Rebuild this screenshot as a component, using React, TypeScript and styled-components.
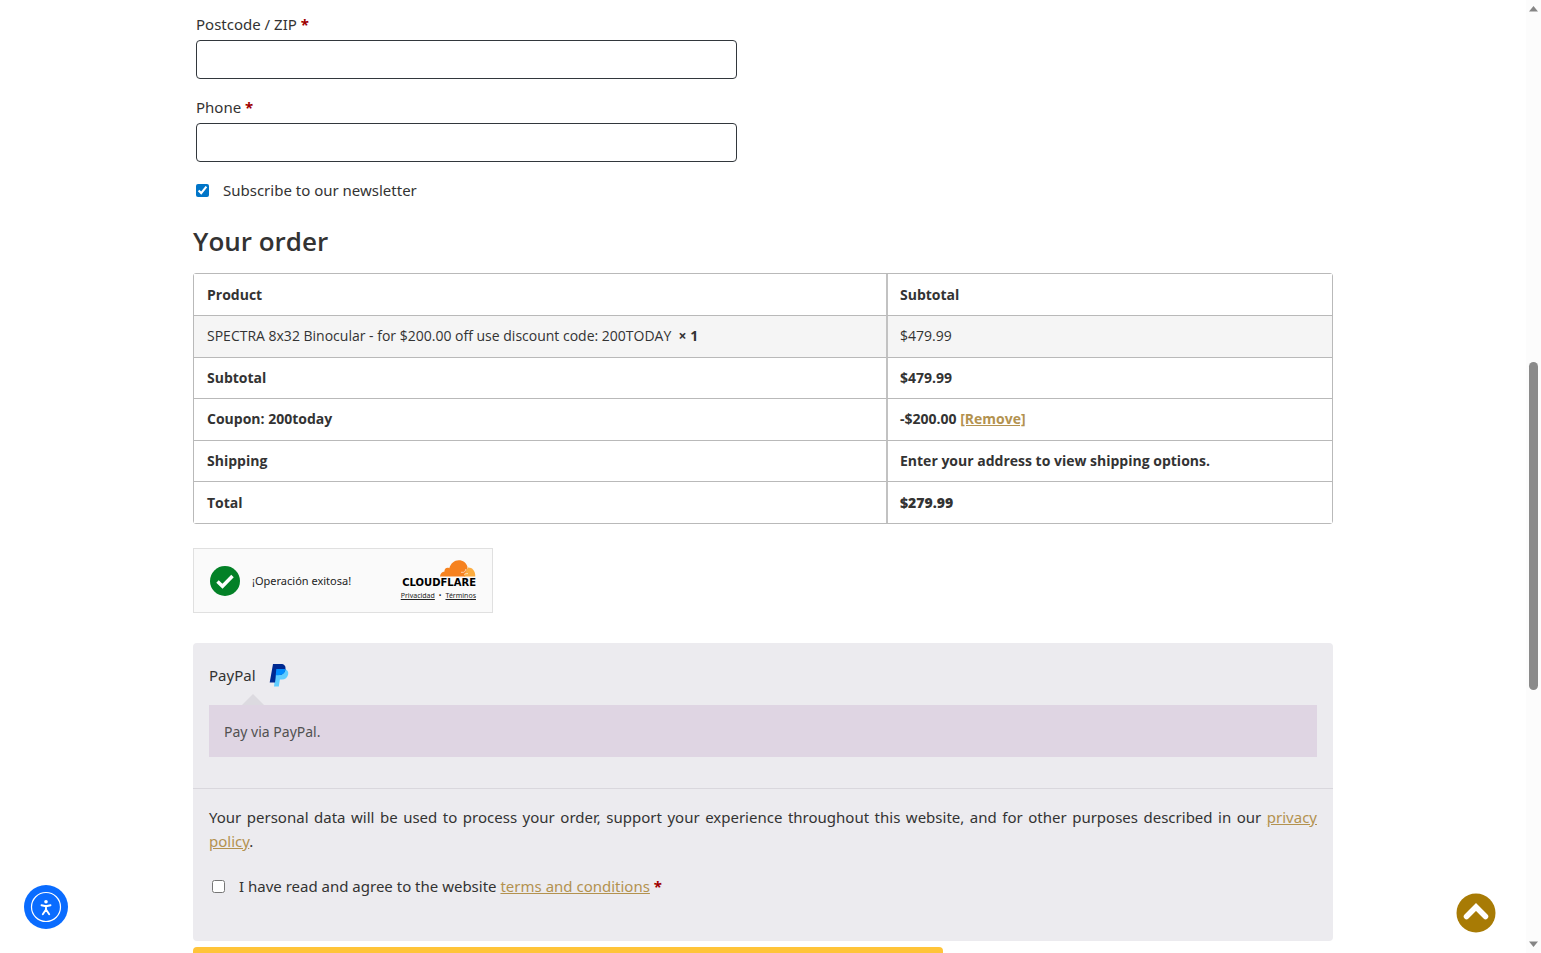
import React from "react";
import styled, { createGlobalStyle } from "styled-components";

const GlobalStyle = createGlobalStyle`
  *, *::before, *::after { box-sizing: border-box; }
  body {
    margin: 0;
    background: #fff;
    color: #333;
    font: 15px/24px "Noto Sans", "Open Sans", sans-serif;
  }
`;

const Viewport = styled.div`
  display: flex;
  height: 100vh;
  overflow: hidden;
`;

const Page = styled.main`
  flex: 1;
  min-width: 0;
`;

const Checkout = styled.form`
  max-width: 1140px;
  margin: 0 auto;
  padding-top: 12px;
`;

const Fields = styled.div`
  display: flex;
  flex-direction: column;
  gap: 16px;
  padding-left: 3px;
`;

const Field = styled.div`
  display: flex;
  flex-direction: column;
  gap: 4px;
  max-width: 541px;
`;

const TextInput = styled.input`
  width: 100%;
  height: 39px;
  padding: 8px 12px;
  border: 1px solid #32373c;
  border-radius: 4px;
  background: #fff;
  font: inherit;
`;

const Required = styled.span`
  color: #a00000;
  font-weight: 700;
`;

const CheckLabel = styled.label<{ $inset?: boolean }>`
  display: flex;
  align-items: center;
  gap: 14px;
  padding-left: ${(p) => (p.$inset ? "3px" : "0")};
`;

const CheckBox = styled.input`
  width: 13px;
  height: 13px;
  margin: 0;
  accent-color: #0075c8;
`;

const Link = styled.a`
  color: #b3924f;
  text-decoration: underline;
`;

const Heading = styled.h3`
  margin: 23px 0 16px;
  font-family: "Open Sans", sans-serif;
  font-size: 26px;
  line-height: 32px;
  font-weight: 600;
`;

const OrderTable = styled.table`
  width: 100%;
  height: 251px;
  border: 1px solid #b9b9b9;
  border-radius: 3px;
  border-spacing: 0;
  font-family: "Open Sans", sans-serif;
  font-size: 14px;
  line-height: 20px;
  text-align: left;
`;

const Cell = styled.td<{ $weight?: number }>`
  padding: 10px 13px;
  font-weight: ${(p) => p.$weight ?? 400};
  & + & {
    width: 446px;
    padding-left: 12px;
    border-left: 2px solid #c2c2c2;
  }
`;

const Row = styled.tr<{ $shaded?: boolean }>`
  background: ${(p) => (p.$shaded ? "#f5f5f5" : "#fff")};
  & > * { border-top: 1px solid #b9b9b9; }
  thead & > * { height: 41px; border-top: 0; }
`;

const Captcha = styled.section`
  display: flex;
  align-items: center;
  width: 300px;
  height: 65px;
  margin: 24px 0 30px;
  padding: 0 16px;
  border: 1px solid #e0e0e0;
  background: #fafafa;
  color: #232323;
  font-size: 11px;
`;

const CaptchaText = styled.span`
  flex: 1;
  padding-left: 12px;
`;

const Brand = styled.div`
  display: flex;
  flex-direction: column;
  align-items: flex-end;
`;

const BrandName = styled.span`
  color: #000;
  font: 700 10px/12px "DejaVu Sans", sans-serif;
`;

const BrandLinks = styled.div`
  display: flex;
  gap: 4px;
  margin-top: 1px;
  font-size: 7px;
  line-height: 12px;
  a { color: inherit; }
`;

const Payment = styled.section`
  border-radius: 4px;
  background: #ecebef;
`;

const Methods = styled.div`
  padding: 19px 16px 31px;
  border-bottom: 1px solid #d9d7dd;
`;

const Method = styled.div`
  display: flex;
  align-items: center;
  gap: 13px;
  height: 26px;
`;

const MethodBox = styled.div`
  position: relative;
  margin-top: 17px;
  padding: 15px 15px 13px;
  background: #dfd5e3;
  color: #515151;
  font-size: 14px;
  &::before {
    content: "";
    position: absolute;
    left: 33px;
    bottom: 100%;
    border: 11px solid transparent;
    border-top-width: 0;
    border-bottom-color: #dcdae0;
  }
`;

const Terms = styled.div`
  display: flex;
  flex-direction: column;
  gap: 21px;
  padding: 16px 16px 43px;
`;

const Paragraph = styled.p`
  margin: 0;
  text-align: justify;
`;

const PayButton = styled.button`
  display: block;
  width: 100%;
  max-width: 750px;
  height: 48px;
  margin-top: 6px;
  border: 0;
  border-radius: 4px;
  background: #ffc439;
`;

const RoundButton = styled.button<{ $side: "left" | "right" }>`
  position: fixed;
  bottom: ${(p) => (p.$side === "left" ? "24px" : "20px")};
  ${(p) => (p.$side === "left" ? "left: 24px;" : "right: 45px;")}
  padding: 0;
  border: 0;
  background: none;
  svg { display: block; }
`;

const ScrollTrack = styled.div`
  display: flex;
  flex-direction: column;
  align-items: center;
  width: 15px;
  padding: 6px 0;
  background: #fcfcfc;
`;

const ScrollSpace = styled.div<{ $grow: number }>`
  flex: ${(p) => p.$grow} 0 0;
`;

const ScrollThumb = styled.div`
  flex: 328 0 0;
  width: 9px;
  border-radius: 5px;
  background: #8b8b8b;
`;

const rows = [
  { label: "Subtotal", value: "$479.99" },
  { label: "Coupon: 200today", value: "-$200.00 ", remove: true },
  { label: "Shipping", value: "Enter your address to view shipping options." },
  { label: "Total", value: "$279.99", weight: 800 },
];

function PayPalMark() {
  return (
    <svg width="20" height="24" viewBox="0 0 20 24" aria-hidden="true">
      <path d="M7 6h8.500c3 .6 4.200 2.700 3.700 5.300-.7 3.500-3 5.200-6.300 5.200h-2L9.800 23.500H5z" fill="#60cdff" />
      <path d="M4 1h7.800c3.500 0 5.100 2 4.700 5-.6 4-3.300 6-7 6H7l-1 7.500H.700z" fill="#002991" />
      <path d="M7.300 6h9.200c-.5 4.200-3.200 6.200-7 6.200H7l-.8 5.300z" fill="#008cff" />
    </svg>
  );
}

function Cloud() {
  return (
    <svg width="36" height="17" viewBox="0 0 36 17" aria-hidden="true">
      <path d="M0 16.500c.2-3 2-4.700 4.500-5-.4-2.700 2.300-4.600 4.800-3.300C10.600 3.400 14.400.3 18.700.3c4.300 0 7.800 2.700 8.800 6.600l-2.300 9.600z" fill="#f6821f" />
      <path d="M24 16.500l1.500-4.300 2.300-4.700c4.400-.2 7.600 3.200 7.500 9z" fill="#fbad41" />
      <path d="M21 12.300h2.500c1.500-.2 1.800-1.800 2.500-3.300M24 14.600c1-.8 2-1 4-1" fill="none" stroke="#fff" strokeWidth=".8" opacity=".8" />
    </svg>
  );
}

export default function App() {
  return (
    <>
      <GlobalStyle />
      <Viewport>
        <Page>
          <Checkout onSubmit={(e) => e.preventDefault()}>
            <Fields>
              <Field>
                <label htmlFor="postcode">Postcode / ZIP <Required>*</Required></label>
                <TextInput id="postcode" type="text" />
              </Field>
              <Field>
                <label htmlFor="phone">Phone <Required>*</Required></label>
                <TextInput id="phone" type="tel" />
              </Field>
              <CheckLabel>
                <CheckBox type="checkbox" defaultChecked />
                <span>Subscribe to our newsletter</span>
              </CheckLabel>
            </Fields>

            <Heading>Your order</Heading>
            <OrderTable>
              <thead>
                <Row>
                  <Cell as="th" $weight={700}>Product</Cell>
                  <Cell as="th" $weight={700}>Subtotal</Cell>
                </Row>
              </thead>
              <tbody>
                <Row $shaded>
                  <Cell>
                    SPECTRA 8x32 Binocular - for $200.00 off use discount code: 200TODAY&nbsp; <strong>×&nbsp;1</strong>
                  </Cell>
                  <Cell>$479.99</Cell>
                </Row>
                {rows.map((r) => (
                  <Row key={r.label}>
                    <Cell as="th" $weight={700}>{r.label}</Cell>
                    <Cell $weight={r.weight ?? 700}>
                      {r.value}
                      {r.remove && <Link href="#remove">[Remove]</Link>}
                    </Cell>
                  </Row>
                ))}
              </tbody>
            </OrderTable>

            <Captcha>
              <svg width="30" height="30" viewBox="0 0 30 30" aria-hidden="true">
                <circle cx="15" cy="15" r="15" fill="#038127" />
                <path d="M7.500 15.500l5 4.800 10-10.300" fill="none" stroke="#fff" strokeWidth="3.500" />
              </svg>
              <CaptchaText>¡Operación exitosa!</CaptchaText>
              <Brand>
                <Cloud />
                <BrandName>CLOUDFLARE</BrandName>
                <BrandLinks>
                  <a href="#privacidad">Privacidad</a>
                  <span>•</span>
                  <a href="#terminos">Términos</a>
                </BrandLinks>
              </Brand>
            </Captcha>

            <Payment>
              <Methods>
                <Method>
                  <span>PayPal</span>
                  <PayPalMark />
                </Method>
                <MethodBox>Pay via PayPal.</MethodBox>
              </Methods>
              <Terms>
                <Paragraph>
                  Your personal data will be used to process your order, support your experience throughout this
                  website, and for other purposes described in our <Link href="#privacy">privacy policy</Link>.
                </Paragraph>
                <CheckLabel $inset>
                  <CheckBox type="checkbox" />
                  <span>
                    I have read and agree to the website <Link href="#terms">terms and conditions</Link>{" "}
                    <Required>*</Required>
                  </span>
                </CheckLabel>
              </Terms>
            </Payment>
            <PayButton type="submit" aria-label="PayPal" />
          </Checkout>
        </Page>
        <ScrollTrack aria-hidden="true">
          <svg width="9" height="6" viewBox="0 0 9 6"><path d="M0 5.500L4.500 0 9 5.500z" fill="#858585" /></svg>
          <ScrollSpace $grow={350} />
          <ScrollThumb />
          <ScrollSpace $grow={251} />
          <svg width="9" height="6" viewBox="0 0 9 6"><path d="M0 .5L4.500 6 9 .5z" fill="#858585" /></svg>
        </ScrollTrack>
      </Viewport>

      <RoundButton $side="left" type="button" aria-label="Accessibility">
        <svg width="44" height="44" viewBox="0 0 44 44">
          <circle cx="22" cy="22" r="22" fill="#0a6cff" />
          <circle cx="22" cy="22" r="14.500" fill="none" stroke="#fff" strokeWidth="1.200" />
          <circle cx="22" cy="16.800" r="1.800" fill="#fff" />
          <path d="M17.500 20.300l4.500.9 4.500-.9M22 21v4M18.800 29.300L22 24.500l3.200 4.800" fill="none" stroke="#fff" strokeWidth="1.900" strokeLinecap="round" strokeLinejoin="round" />
        </svg>
      </RoundButton>
      <RoundButton $side="right" type="button" aria-label="Back to top">
        <svg width="40" height="40" viewBox="0 0 40 40">
          <circle cx="20" cy="20" r="19.500" fill="#a87b05" />
          <path d="M10.500 23.500L20 14l9.500 9.500" fill="none" stroke="#fff" strokeWidth="5.500" strokeLinecap="round" strokeLinejoin="miter" />
        </svg>
      </RoundButton>
    </>
  );
}
